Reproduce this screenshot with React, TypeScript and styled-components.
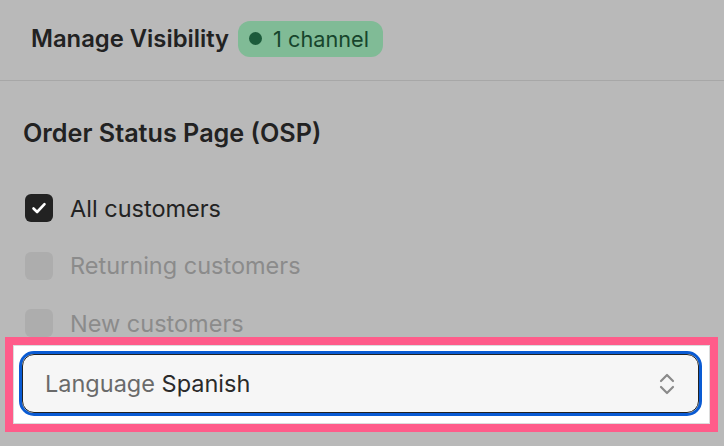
import React from "react";
import styled, { createGlobalStyle } from "styled-components";

const GlobalStyle = createGlobalStyle`
  html, body {
    margin: 0;
    padding: 0;
    background: #b9b9b9;
    font-family: Inter, "Noto Sans", "Liberation Sans", sans-serif;
    -webkit-font-smoothing: antialiased;
  }
  * { box-sizing: border-box; }
`;

const Page = styled.div`
  width: 724px;
  height: 446px;
  overflow: hidden;
  background: #b9b9b9;
  display: flex;
  flex-direction: column;
`;

const Header = styled.header`
  height: 81px;
  flex: none;
  display: flex;
  align-items: center;
  gap: 9px;
  padding: 0 0 3px 31px;
  border-bottom: 1px solid #a7a7a7;
`;

const HeaderTitle = styled.h1`
  margin: 0;
  font-size: 23.8px;
  font-weight: 600;
  color: #222;
`;

const Badge = styled.span`
  display: inline-flex;
  align-items: center;
  gap: 11px;
  height: 36px;
  padding: 0 14px 0 11px;
  border-radius: 12px;
  background: #80bb96;
  color: #17452c;
  font-size: 21.7px;
  font-weight: 400;
`;

const Dot = styled.span`
  width: 13px;
  height: 13px;
  border-radius: 50%;
  background: #1c5b3b;
`;

const Section = styled.section`
  padding: 36px 0 0 23px;
  display: flex;
  flex-direction: column;
`;

const SectionTitle = styled.h2`
  margin: 0;
  font-size: 25.2px;
  line-height: 32px;
  font-weight: 600;
  color: #222;
`;

const OptionList = styled.div`
  display: flex;
  flex-direction: column;
  gap: 29.5px;
  margin: 45px 0 0 2px;
`;

const Option = styled.label<{ $disabled?: boolean }>`
  display: flex;
  align-items: center;
  gap: 17px;
  height: 28px;
  font-size: 23.5px;
  color: ${(p) => (p.$disabled ? "#8b8b8b" : "#232323")};
`;

const Box = styled.span<{ $checked?: boolean }>`
  width: 28px;
  height: 28px;
  border-radius: 6px;
  flex: none;
  display: flex;
  align-items: center;
  justify-content: center;
  background: ${(p) => (p.$checked ? "#222" : "#adadad")};
`;

const Highlight = styled.div`
  margin: 8px 0 0 13px;
  width: 697px;
  padding: 6px 8px 8px 6px;
  background: #fff;
  box-shadow: 0 0 0 8px #ff5c8a, inset 0 0 0 1px #dcdcdc;
`;

const Select = styled.div`
  height: 65px;
  border: 3px solid #0a5bd3;
  border-radius: 15px;
  display: flex;
`;

const SelectInner = styled.div`
  flex: 1;
  border: 1px solid #222;
  border-radius: 12px;
  background: #f6f6f6;
  display: flex;
  align-items: center;
  justify-content: space-between;
  padding: 0 23px 0 22px;
  font-size: 23.5px;
`;

const SelectLabel = styled.span`
  color: #6a6a6a;
`;

const SelectValue = styled.span`
  color: #2a2a2a;
`;

const Check = () => (
  <svg width="18" height="18" viewBox="0 0 18 18" fill="none">
    <path d="M3.5 9.5l3.6 3.5L14.5 5.2" stroke="#fff" strokeWidth="2.6" strokeLinecap="round" strokeLinejoin="round" />
  </svg>
);

const Chevrons = () => (
  <svg width="16" height="24" viewBox="0 0 16 24" fill="none">
    <path d="M2 9l6-6 6 6" stroke="#8a8a8a" strokeWidth="2.2" strokeLinecap="round" strokeLinejoin="round" />
    <path d="M2 15l6 6 6-6" stroke="#8a8a8a" strokeWidth="2.2" strokeLinecap="round" strokeLinejoin="round" />
  </svg>
);

export default function App() {
  return (
    <Page>
      <GlobalStyle />
      <Header>
        <HeaderTitle>Manage Visibility</HeaderTitle>
        <Badge>
          <Dot />
          1 channel
        </Badge>
      </Header>
      <Section>
        <SectionTitle>Order Status Page (OSP)</SectionTitle>
        <OptionList>
          <Option>
            <Box $checked>
              <Check />
            </Box>
            All customers
          </Option>
          <Option $disabled>
            <Box />
            Returning customers
          </Option>
          <Option $disabled>
            <Box />
            New customers
          </Option>
        </OptionList>
      </Section>
      <Highlight>
        <Select>
          <SelectInner>
            <span>
              <SelectLabel>Language</SelectLabel> <SelectValue>Spanish</SelectValue>
            </span>
            <Chevrons />
          </SelectInner>
        </Select>
      </Highlight>
    </Page>
  );
}
